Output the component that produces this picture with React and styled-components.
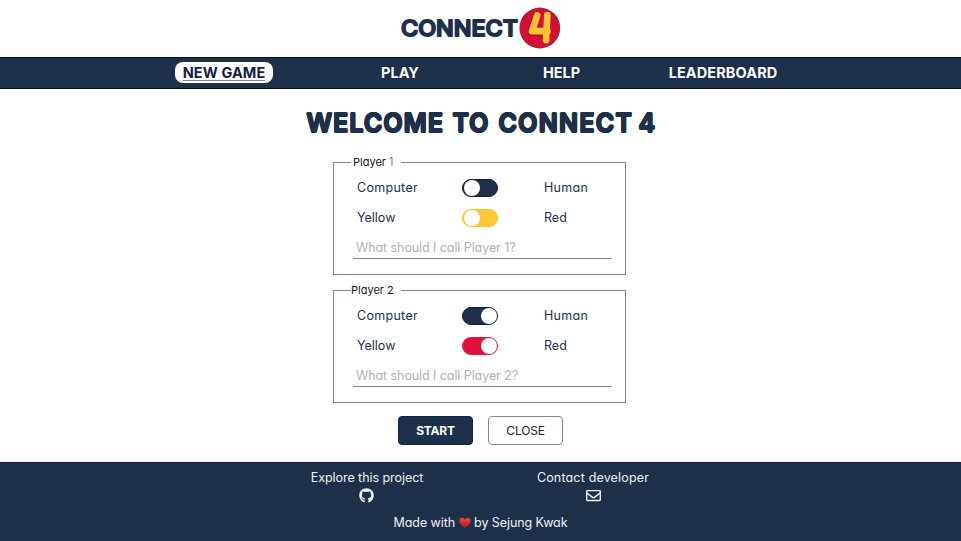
import React from "react";
import styled, { createGlobalStyle } from "styled-components";
import { FaGithub, FaRegEnvelope } from "react-icons/fa";

const navy = "#1e3049";
const ink = "#1c2f50";

const GlobalStyle = createGlobalStyle`
  *, *::before, *::after { box-sizing: border-box; }
  body {
    margin: 0;
    background: #fff;
    font-family: Inter, "Open Sans", sans-serif;
    font-feature-settings: "cv11" 1;
    overflow: hidden;
  }
`;

const Page = styled.div`
  width: 961px;
  height: 541px;
  display: flex;
  flex-direction: column;
`;

const Header = styled.header`
  height: 57px;
  display: flex;
  padding-left: 390px;
`;

const LogoArt = styled.svg`
  width: 180px;
  height: 57px;
  display: block;
`;

const LogoWord = styled.text`
  font: 500 21.5px Inter, sans-serif;
  fill: ${navy};
  stroke: ${navy};
  stroke-width: 1.8px;
  stroke-linejoin: round;
`;

const Nav = styled.nav`
  height: 32px;
  background: ${navy};
  border-top: 1px solid #06101f;
  border-bottom: 1px solid #06101f;
  display: grid;
  grid-template-columns: 176px 176px 147px 176px;
  padding-left: 136px;
  align-items: center;
  justify-items: center;
`;

const NavLink = styled.a`
  height: 21px;
  display: flex;
  justify-content: center;
  align-items: center;
  color: #fff;
  font-size: 14.5px;
  font-weight: 700;
  line-height: 20px;
  white-space: nowrap;
  letter-spacing: ${(p) => p.$track || 0}px;
`;

const ActiveLink = styled(NavLink)`
  width: 98px;
  margin: 0 1px 1px 0;
  padding-left: 1px;
  background: #fff;
  color: #14213f;
  border-radius: 8px;
`;

const Underlined = styled.span`
  height: 17px;
  line-height: 17px;
  border-bottom: 1px solid #7c8a91;
`;

const Main = styled.main`
  height: 373px;
  display: flex;
  flex-direction: column;
  align-items: center;
`;

const Title = styled.h1`
  margin: 17px 0 0;
  width: 348px;
  height: 34px;
  display: flex;
  font-size: 25px;
  line-height: 34px;
  font-weight: 600;
  color: ${navy};
  text-shadow: 0.9px 0 ${navy}, -0.9px 0 ${navy}, 0 0.9px ${navy}, 0 -0.9px ${navy},
    0.6px 0.6px ${navy}, -0.6px 0.6px ${navy}, 0.6px -0.6px ${navy}, -0.6px -0.6px ${navy};
`;

const Word = styled.span`
  width: ${(p) => p.$width}px;
  letter-spacing: ${(p) => p.$track || 0}px;
`;

const Player = styled.fieldset`
  width: 293px;
  height: ${(p) => p.$height}px;
  margin: ${(p) => p.$top}px 2px 0 0;
  border: 1px solid #7d899b;
  padding: 0 14px 0 19px;
  min-width: 0;
`;

const Legend = styled.legend`
  width: 50px;
  height: 14px;
  margin-left: -2px;
  padding-left: ${(p) => p.$indent || 0}px;
  font-size: 11px;
  line-height: 15px;
  color: #151515;
  white-space: nowrap;
`;

const Faint = styled.span`
  font-weight: 300;
  color: #555;
`;

const Options = styled.div`
  padding-top: 4px;
`;

const Option = styled.div`
  height: 30px;
  display: grid;
  grid-template-columns: 105px 82px 1fr;
  padding-left: 4px;
  align-items: center;
  font-size: 12.5px;
  color: ${ink};
`;

const Label = styled.span`
  padding-bottom: 2px;
  letter-spacing: ${(p) => p.$track || 0}px;
`;

const Switch = styled.button`
  width: 36px;
  height: 18px;
  padding: 0 0.5px;
  border: 1px solid ${(p) => p.$edge};
  border-radius: 9px;
  background: ${(p) => p.$color};
  display: flex;
  align-items: center;
  justify-content: ${(p) => (p.$on ? "flex-end" : "flex-start")};
`;

const Knob = styled.span`
  width: 16px;
  height: 16px;
  border-radius: 50%;
  background: #fff;
`;

const NameInput = styled.input`
  display: block;
  width: 259px;
  height: 26px;
  padding: 4px 3px 0;
  border: 0;
  border-bottom: 1px solid #76869d;
  outline: 0;
  background: transparent;
  font: 400 12.5px Inter, sans-serif;
  font-feature-settings: "cv11" 1;
  letter-spacing: -0.08px;
  &::placeholder { color: #b0b0b0; opacity: 1; }
`;

const Actions = styled.div`
  display: flex;
  gap: 15px;
  margin-top: 13px;
`;

const Button = styled.button`
  width: 75px;
  height: 29px;
  padding: 0 0 1px;
  border-radius: 4px;
  border: 1px solid ${(p) => (p.$primary ? "#132349" : "#7b8799")};
  background: ${(p) => (p.$primary ? navy : "#fff")};
  color: ${(p) => (p.$primary ? "#fff" : "#222")};
  font: ${(p) => (p.$primary ? 700 : 400)} 12px Inter, sans-serif;
  letter-spacing: -0.2px;
`;

const Footer = styled.footer`
  height: 79px;
  background: ${navy};
  border-top: 1px solid #101f40;
  color: #f0f2f4;
  font-size: 12.5px;
  display: flex;
  flex-direction: column;
  align-items: center;
`;

const Contacts = styled.div`
  display: grid;
  grid-template-columns: 226px 226px;
  justify-items: center;
  height: 50px;
  padding: 5px 1px 0 0;
`;

const Contact = styled.a`
  display: flex;
  flex-direction: column;
  align-items: center;
  line-height: 20px;
  letter-spacing: ${(p) => p.$track || 0}px;
  svg { display: block; }
`;

const Credit = styled.div`
  display: flex;
  align-items: center;
  line-height: 20px;
  letter-spacing: -0.07px;
`;

const HeartArt = styled.svg`
  width: 12px;
  height: 12px;
  margin: 0 3px 1px 4px;
`;

const Logo = () => (
  <LogoArt viewBox="390 0 180 57">
    <defs>
      <radialGradient id="disc">
        <stop offset="0.7" stopColor="#d80d37" />
        <stop offset="1" stopColor="#bf1736" />
      </radialGradient>
    </defs>
    <LogoWord x="401" y="35.8" textLength="117" lengthAdjust="spacingAndGlyphs">CONNECT</LogoWord>
    <circle cx="539.8" cy="28" r="20.4" fill="url(#disc)" />
    <path d="M536.5 16L531.5 32.3H546M548.2 15.5L545.6 41" fill="none" stroke="#a90f30" strokeWidth="7.2" strokeLinecap="round" strokeLinejoin="round" />
    <path d="M537.2 15.5L532 31.2H547.5M547.4 15.2L546 40.2" fill="none" stroke="#fdc534" strokeWidth="6.7" strokeLinecap="round" strokeLinejoin="round" />
  </LogoArt>
);

const Heart = () => (
  <HeartArt viewBox="0 0 12 12">
    <defs>
      <linearGradient id="heart" x2="0" y2="1">
        <stop stopColor="#f0473b" />
        <stop offset="1" stopColor="#a91313" />
      </linearGradient>
    </defs>
    <path d="M6 11.6C4.4 9.7.4 7.1.4 3.7.4 2 1.5.8 3.1.8 4.5.8 5.5 1.7 6 3c.5-1.3 1.5-2.2 2.9-2.2 1.6 0 2.7 1.2 2.7 2.9 0 3.4-4 6-5.6 7.9z" fill="url(#heart)" />
  </HeartArt>
);

const PlayerForm = ({ number, on, color, edge, top, height, indent }) => (
  <Player $top={top} $height={height}>
    <Legend $indent={indent}>
      Player {number === 1 ? <Faint>1</Faint> : number}
    </Legend>
    <Options>
      <Option>
        <Label $track={0.3}>Computer</Label>
        <Switch $on={on} $color={navy} $edge="#0e1c38" aria-label="Computer or human"><Knob /></Switch>
        <Label $track={0.3}>Human</Label>
      </Option>
      <Option>
        <Label>Yellow</Label>
        <Switch $on={on} $color={color} $edge={edge} aria-label="Yellow or red"><Knob /></Switch>
        <Label>Red</Label>
      </Option>
    </Options>
    <NameInput placeholder={`What should I call Player ${number}?`} />
  </Player>
);

export default function App() {
  return (
    <Page>
      <GlobalStyle />
      <Header><Logo /></Header>
      <Nav>
        <ActiveLink $track={0.1}><Underlined>NEW GAME</Underlined></ActiveLink>
        <NavLink>PLAY</NavLink>
        <NavLink>HELP</NavLink>
        <NavLink $track={0.1}>LEADERBOARD</NavLink>
      </Nav>
      <Main>
        <Title>
          <Word $width={146} $track={1.1}>WELCOME</Word>
          <Word $width={46} $track={1}>TO</Word>
          <Word $width={140} $track={1.3}>CONNECT</Word>
          <Word $width={16}>4</Word>
        </Title>
        <PlayerForm number={1} on={false} color="#ffc636" edge="#ffc21f" top={15} height={120} indent={2} />
        <PlayerForm number={2} on color="#df1040" edge="#ee1238" top={8} height={120} />
        <Actions>
          <Button $primary>START</Button>
          <Button>CLOSE</Button>
        </Actions>
      </Main>
      <Footer>
        <Contacts>
          <Contact $track={-0.05}>Explore this project<FaGithub size={15} /></Contact>
          <Contact $track={0.17}>Contact developer<FaRegEnvelope size={15} /></Contact>
        </Contacts>
        <Credit>Made with <Heart /> by Sejung Kwak</Credit>
      </Footer>
    </Page>
  );
}
